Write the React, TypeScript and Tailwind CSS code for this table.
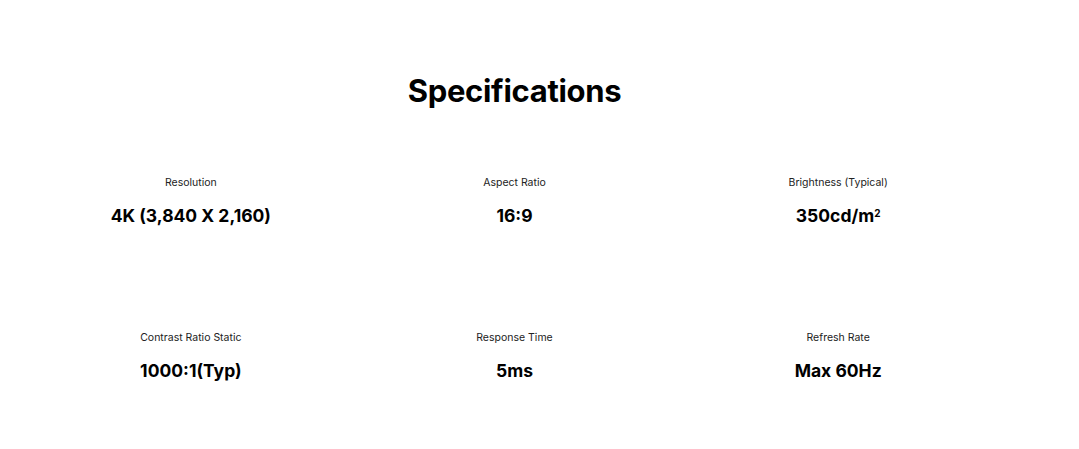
const specs = [
  { label: "Resolution", value: "4K (3,840 X 2,160)" },
  { label: "Aspect Ratio", value: "16:9" },
  { label: "Brightness (Typical)", value: "350cd/m", sup: "2" },
  { label: "Contrast Ratio Static", value: "1000:1(Typ)" },
  { label: "Response Time", value: "5ms" },
  { label: "Refresh Rate", value: "Max 60Hz" },
];

export default function App() {
  return (
    <div className="min-h-[449px] w-full bg-white text-black" style={{ fontFamily: "Inter, 'Noto Sans', sans-serif" }}>
      <div className="ml-[29px] w-[971px] pt-[73px]">
        <h2 className="text-center text-[31px] font-bold leading-[36px] tracking-[-0.3px]">Specifications</h2>
        <div className="mt-[67px] grid grid-cols-3 gap-y-[103px]">
          {specs.map((s) => (
            <div key={s.label} className="flex flex-col items-center">
              <p className="text-[10.5px] leading-[14px] text-[#222]">{s.label}</p>
              <p className="mt-[14px] text-[17.5px] font-bold leading-[24px]">
                {s.value}
                {s.sup && <sup className="text-[10px] font-bold">{s.sup}</sup>}
              </p>
            </div>
          ))}
        </div>
      </div>
    </div>
  );
}
